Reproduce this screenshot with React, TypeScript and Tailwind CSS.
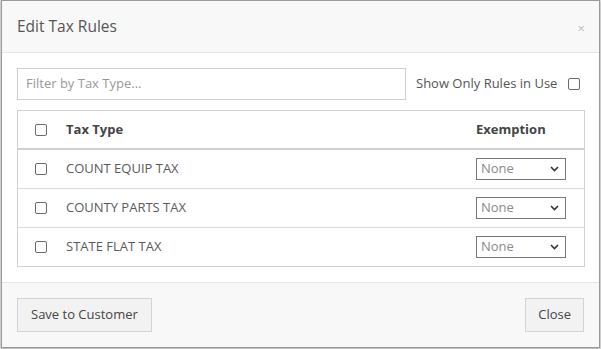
import React from "react";

const Box = () => (
  <div className="w-[12px] h-[12px] rounded-[2px] border border-[#6b6b6b] bg-white" />
);

const Sel = () => (
  <div className="w-[90px] h-[22px] border border-[#767676] flex items-center justify-between pl-[4px] pr-[6px] bg-white">
    <span className="text-[13px] text-[#8a8a8a]">None</span>
    <svg width="9" height="6" viewBox="0 0 9 6">
      <path d="M1 1 L4.5 4.5 L8 1" stroke="#333" strokeWidth="1.6" fill="none" />
    </svg>
  </div>
);

const rows = ["COUNT EQUIP TAX", "COUNTY PARTS TAX", "STATE FLAT TAX"];

export default function App() {
  return (
    <div
      className="w-[601px] h-[349px] bg-[#e9e9e9] overflow-hidden"
      style={{ fontFamily: '"Open Sans", "Noto Sans", sans-serif' }}
    >
      <div className="ml-[1px] w-[599px] h-[348px] border border-[#9a9a9a] bg-white flex flex-col shadow-[0_1px_3px_rgba(0,0,0,0.3)]">
        <div className="h-[52px] bg-[#f8f8f8] border-b border-[#e5e5e5] flex items-center justify-between pl-[15px] pr-[14px]">
          <span className="text-[15.5px] text-[#555] font-medium">Edit Tax Rules</span>
          <span className="text-[13px] text-[#bbb] leading-none mt-[3px]">×</span>
        </div>
        <div className="flex-1 px-[15px] pt-[15px]">
          <div className="flex items-center">
            <div className="w-[389px] h-[32px] border border-[#cfcfcf] flex items-center px-[8px]">
              <span className="text-[13px] text-[#999]">Filter by Tax Type...</span>
            </div>
            <span className="ml-[10px] text-[13px] text-[#555]">Show Only Rules in Use</span>
            <div className="ml-[11px]">
              <Box />
            </div>
          </div>
          <div className="mt-[10px] w-[568px] border border-[#d0d0d0]">
            <div className="h-[39px] flex items-center border-b-2 border-[#d0d0d0]">
              <div className="w-[48px] pl-[17px]">
                <Box />
              </div>
              <span className="flex-1 text-[13px] font-bold text-[#444]">Tax Type</span>
              <span className="w-[108px] text-[13px] font-bold text-[#444]">Exemption</span>
            </div>
            {rows.map((r, i) => (
              <div
                key={r}
                className={`flex items-center ${i < rows.length - 1 ? "h-[39px] border-b border-[#dcdcdc]" : "h-[38px]"}`}
              >
                <div className="w-[48px] pl-[17px]">
                  <Box />
                </div>
                <span className="flex-1 text-[13px] text-[#5a5a5a]">{r}</span>
                <div className="w-[108px]">
                  <Sel />
                </div>
              </div>
            ))}
          </div>
        </div>
        <div className="h-[65px] bg-[#f8f8f8] border-t border-[#e5e5e5] flex items-center justify-between px-[15px]">
          <div className="h-[34px] px-[13px] border border-[#d3d3d3] bg-[#f2f2f2] flex items-center text-[13px] text-[#444]">
            Save to Customer
          </div>
          <div className="h-[34px] px-[12px] border border-[#d3d3d3] bg-[#f2f2f2] flex items-center text-[13px] text-[#444]">
            Close
          </div>
        </div>
      </div>
    </div>
  );
}
